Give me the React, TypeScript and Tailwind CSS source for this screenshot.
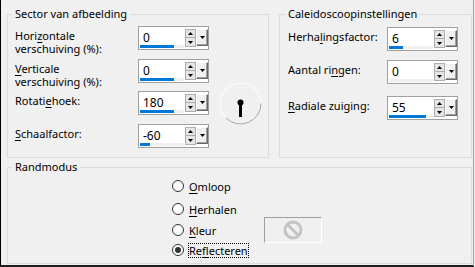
import React from 'react';

function Ul({ children }: { children: React.ReactNode }) {
  return <span className="underline underline-offset-[2px]">{children}</span>;
}

function Arrow({ dir }: { dir: 'up' | 'down' }) {
  return (
    <svg width="5" height="3" viewBox="0 0 5 3">
      <polygon points={dir === 'up' ? '0,3 5,3 2.5,0' : '0,0 5,0 2.5,3'} fill="#000" />
    </svg>
  );
}

function SpinBox({ value, bar }: { value: string; bar: number }) {
  return (
    <div className="flex h-[24px] w-[71px] border border-[#a0a0a0] bg-white">
      <div className="flex w-[46px] flex-col">
        <span className="flex-1 pl-[4px] pt-[3px] text-[12px] leading-[15px] text-black">{value}</span>
        <div className="mb-[1px] ml-[1px] h-[3px] w-[44px] bg-[#f0f0f0]">
          <div className="h-full bg-[#0078d7]" style={{ width: bar }} />
        </div>
      </div>
      <div className="flex w-[11px] flex-col pt-[2px]">
        <div className="flex h-[9px] w-[11px] items-center justify-center border border-[#adadad] bg-[#e5e5e5]">
          <Arrow dir="up" />
        </div>
        <div className="flex h-[9px] w-[11px] items-center justify-center border border-t-0 border-[#adadad] bg-[#e5e5e5]">
          <Arrow dir="down" />
        </div>
      </div>
      <div className="mt-[2px] flex h-[17px] w-[12px] items-center justify-center border-b border-l border-r border-t border-b-[#696969] border-l-white border-r-[#696969] border-t-white bg-[#f0f0f0] shadow-[inset_-1px_-1px_0_#a0a0a0]">
        <Arrow dir="down" />
      </div>
    </div>
  );
}

function Row({ h, label, value, bar, labelW }: { h: number; label: React.ReactNode; value: string; bar: number; labelW: string }) {
  return (
    <div className="flex items-start" style={{ height: h }}>
      <div className={`${labelW} pt-[3px] leading-[13px]`}>{label}</div>
      <SpinBox value={value} bar={bar} />
    </div>
  );
}

function Dial() {
  return (
    <svg width="44" height="44" viewBox="0 0 44 44" className="ml-[10px] mt-[60px]">
      <circle cx="21.5" cy="21.5" r="20.5" fill="none" stroke="#ffffff" strokeWidth="1" />
      <path d="M 42 21.5 A 20.5 20.5 0 0 1 7 36" fill="none" stroke="#a0a0a0" strokeWidth="1" />
      <line x1="21.5" y1="21" x2="21.5" y2="35" stroke="#000" strokeWidth="3" />
      <circle cx="21.5" cy="20.5" r="3" fill="#000" />
    </svg>
  );
}

function Radio({ label, checked, focus }: { label: React.ReactNode; checked?: boolean; focus?: boolean }) {
  return (
    <div className="flex h-[16px] items-center">
      <div className="flex h-[12px] w-[12px] items-center justify-center rounded-full border border-[#333] bg-white">
        {checked && <div className="h-[6px] w-[6px] rounded-full bg-[#333]" />}
      </div>
      <span
        className={`ml-[4px] border px-0 leading-[13px] ${focus ? 'border-dotted border-black' : 'border-transparent'}`}
      >
        {label}
      </span>
    </div>
  );
}

export default function App() {
  return (
    <div className="flex h-[267px] w-[475px] bg-[#f0f0f0] font-['Noto_Sans',sans-serif] text-[11px] text-black">
      <div className="h-[267px] w-[474px] border-b-2 border-l border-r border-b-[#1e1e1e] border-l-black border-r-[#a0a0a0] pl-[6px] pt-[6px]">
        <div className="flex">
          <fieldset className="h-[152px] w-[262px] border border-[#dcdcdc]">
            <legend className="ml-[4px] px-[3px] leading-[16px]">Sector van afbeelding</legend>
            <div className="flex pl-[7px]">
              <div className="flex flex-col pt-[4px]">
                <Row h={33} labelW="w-[123px]" value="0" bar={34} label={<>Hori<Ul>z</Ul>ontale<br />verschuiving (%):</>} />
                <Row h={32} labelW="w-[123px]" value="0" bar={34} label={<><Ul>V</Ul>erticale<br />verschuiving (%):</>} />
                <Row h={33} labelW="w-[123px]" value="180" bar={34} label={<>Rotati<Ul>e</Ul>hoek:</>} />
                <Row h={24} labelW="w-[123px]" value="-60" bar={10} label={<><Ul>S</Ul>chaalfactor:</>} />
              </div>
              <Dial />
            </div>
          </fieldset>
          <fieldset className="ml-[10px] h-[152px] w-[193px] border border-[#dcdcdc]">
            <legend className="ml-[6px] px-[2px] leading-[16px]">Caleidoscoopinstellingen</legend>
            <div className="flex flex-col pl-[8px] pt-[5px]">
              <Row h={33} labelW="w-[99px]" value="6" bar={14} label={<>Herha<Ul>l</Ul>ingsfactor:</>} />
              <Row h={36} labelW="w-[99px]" value="0" bar={0} label={<>Aantal ri<Ul>n</Ul>gen:</>} />
              <Row h={24} labelW="w-[99px]" value="55" bar={37} label={<><Ul>R</Ul>adiale zuiging:</>} />
            </div>
          </fieldset>
        </div>
        <fieldset className="mt-[1px] h-[105px] w-[465px] border border-[#dcdcdc]">
          <legend className="ml-[4px] px-[3px] leading-[16px]">Randmodus</legend>
          <div className="flex items-start pl-[164px] pt-[3px]">
            <div className="flex flex-col">
              <Radio label={<><Ul>O</Ul>mloop</>} />
              <div className="mt-[7px]">
                <Radio label={<><Ul>H</Ul>erhalen</>} />
              </div>
              <div className="mt-[5px]">
                <Radio label={<><Ul>K</Ul>leur</>} />
              </div>
              <div className="mt-[4px]">
                <Radio checked focus label={<>Re<Ul>f</Ul>lecteren</>} />
              </div>
            </div>
            <div className="ml-[15px] mt-[39px] flex h-[26px] w-[58px] items-center justify-center border-b border-l border-r border-t border-b-white border-l-[#a0a0a0] border-r-white border-t-[#a0a0a0]">
              <svg width="20" height="20" viewBox="0 0 20 20">
                <circle cx="10" cy="10" r="8" fill="none" stroke="#c4c4c4" strokeWidth="3" />
                <line x1="4.5" y1="4.5" x2="15.5" y2="15.5" stroke="#c4c4c4" strokeWidth="3" />
              </svg>
            </div>
          </div>
        </fieldset>
      </div>
    </div>
  );
}
